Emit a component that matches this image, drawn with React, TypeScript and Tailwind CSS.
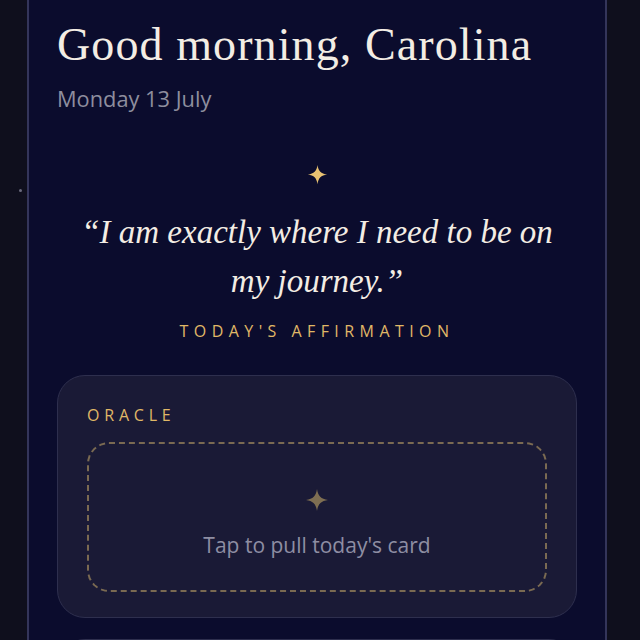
export default function App() {
  return (
    <div className="relative h-[640px] w-[640px] overflow-hidden bg-[#0f0f1d]">
      {/* faint background star */}
      <span className="absolute left-[19px] top-[189px] h-[3px] w-[3px] rounded-full bg-[#6b6b7e]" />

      <div className="ml-[27px] h-[660px] w-[580px] -mt-[20px] border-x-2 border-[#34355a] bg-[#0b0c2d] px-[28px] pt-[37px]">
        <h1 className="font-['Liberation_Serif',serif] text-[46px] leading-[56px] tracking-[1.1px] text-[#f3ede4]">
          Good morning, Carolina
        </h1>
        <p className="mt-[11px] font-['Open_Sans',sans-serif] text-[21.8px] leading-[30px] text-[#8e8e9e]">
          Monday 13 July
        </p>

        <div className="mt-[50px] flex flex-col items-center">
          <Sparkle className="h-[21px] w-[21px] text-[#e9c272]" />
          <p className="mt-[23px] px-[10px] text-center font-['Liberation_Serif',serif] text-[33px] italic leading-[49px] text-[#f3ede4]">
            “I am exactly where I need to be on my journey.”
          </p>
          <p className="mt-[14px] font-['Open_Sans',sans-serif] text-[16px] uppercase leading-[22px] tracking-[0.34em] text-[#e0b867]">
            Today's affirmation
          </p>
        </div>

        <div className="mt-[33px] rounded-[28px] border border-[#2e2f4e] bg-[#1a1a36] px-[29px] pb-[25px] pt-[28px]">
          <p className="font-['Open_Sans',sans-serif] text-[16px] uppercase leading-[22px] tracking-[0.3em] text-[#e0b867]">
            Oracle
          </p>
          <div className="mt-[16px] flex h-[150px] flex-col items-center rounded-[22px] border-2 border-dashed border-[#7a6a52] pt-[44px]">
            <Sparkle className="h-[24px] w-[24px] text-[#7e6e52]" />
            <p className="mt-[19px] font-['Open_Sans',sans-serif] text-[21px] leading-[28px] text-[#8e8ea3]">
              Tap to pull today's card
            </p>
          </div>
        </div>

        <div className="mt-[21px] h-[80px] rounded-[28px] border border-[#2e2f4e] bg-[#1a1a36]" />
      </div>
    </div>
  );
}

function Sparkle({ className }: { className?: string }) {
  return (
    <svg viewBox="0 0 24 24" className={className} fill="currentColor">
      <path d="M12 1 C13 8 16 11 23 12 C16 13 13 16 12 23 C11 16 8 13 1 12 C8 11 11 8 12 1 Z" />
    </svg>
  );
}
